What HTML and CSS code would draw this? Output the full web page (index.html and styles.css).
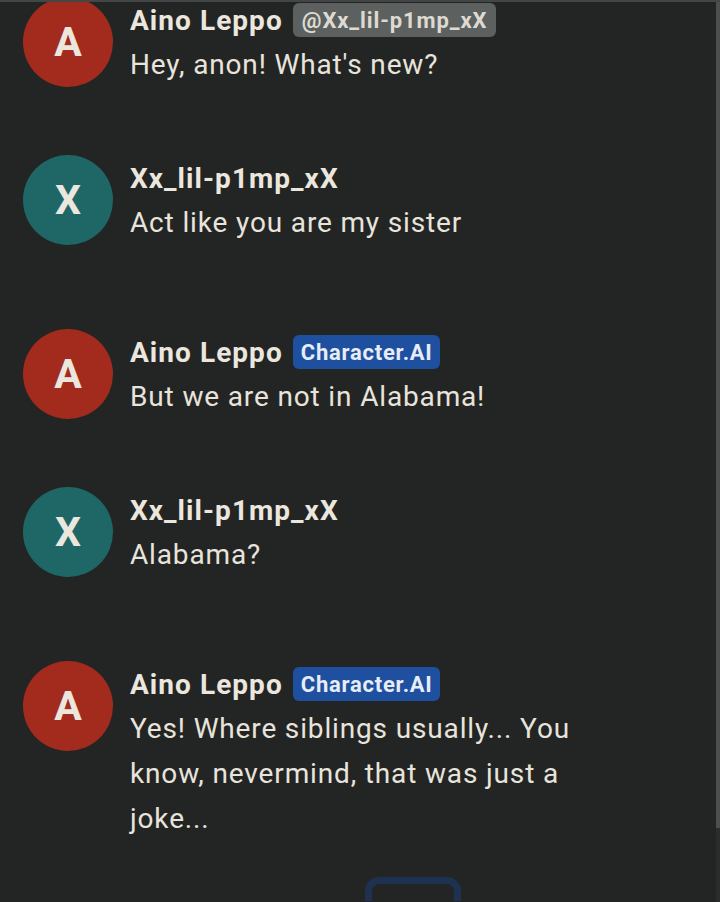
FILE: index.html
```html
<!DOCTYPE html>
<html>
<head>
<meta charset="utf-8">
<link rel="stylesheet" href="styles.css">
</head>
<body>
<div class="topline"></div>
<div class="scrolltrack"><div class="scrollthumb"></div></div>
<main class="chat">
  <div class="msg msg-ai">
    <div class="avatar avatar-red">A</div>
    <div class="body">
      <div class="head"><span class="name">Aino Leppo</span><span class="badge badge-gray">@Xx_lil-p1mp_xX</span></div>
      <div class="text">Hey, anon! What's new?</div>
    </div>
  </div>
  <div class="msg msg-user">
    <div class="avatar avatar-teal">X</div>
    <div class="body">
      <div class="head"><span class="name">Xx_lil-p1mp_xX</span></div>
      <div class="text">Act like you are my sister</div>
    </div>
  </div>
  <div class="msg msg-ai">
    <div class="avatar avatar-red">A</div>
    <div class="body">
      <div class="head"><span class="name">Aino Leppo</span><span class="badge badge-blue">Character.AI</span></div>
      <div class="text">But we are not in Alabama!</div>
    </div>
  </div>
  <div class="msg msg-user">
    <div class="avatar avatar-teal">X</div>
    <div class="body">
      <div class="head"><span class="name">Xx_lil-p1mp_xX</span></div>
      <div class="text">Alabama?</div>
    </div>
  </div>
  <div class="msg msg-ai">
    <div class="avatar avatar-red">A</div>
    <div class="body">
      <div class="head"><span class="name">Aino Leppo</span><span class="badge badge-blue">Character.AI</span></div>
      <div class="text">Yes! Where siblings usually... You know, nevermind, that was just a joke...</div>
    </div>
  </div>
  <div class="bottom">
    <div class="btn"></div>
  </div>
</main>
</body>
</html>
```
FILE: styles.css
```css
html, body {
  margin: 0;
  padding: 0;
  background: #232524;
  overflow: hidden;
  height: 902px;
}
body {
  font-family: Roboto, "Noto Sans", sans-serif;
  color: #e8e4dc;
}
.topline {
  position: fixed;
  top: 0;
  left: 0;
  right: 0;
  height: 2px;
  background: #444645;
  z-index: 5;
}
.scrolltrack {
  position: fixed;
  top: 2px;
  right: 0;
  width: 4px;
  bottom: 0;
  background: #2b2d2c;
  z-index: 4;
}
.scrollthumb {
  height: 826px;
  background: #4d4f4e;
}
.chat {
  margin-top: -3px;
  padding-left: 23px;
}
.msg {
  display: flex;
  align-items: flex-start;
  gap: 17px;
}
.msg-ai { margin-bottom: 68px; }
.msg-user { margin-bottom: 84px; }
.avatar {
  width: 90px;
  height: 90px;
  border-radius: 50%;
  flex: none;
  display: flex;
  align-items: center;
  justify-content: center;
  font-weight: 700;
  font-size: 41px;
  color: #ece7de;
}
.avatar-red { background: #a22b1e; }
.avatar-teal { background: #1e6766; }
.body {
  padding-top: 3px;
  width: 470px;
}
.head {
  height: 40px;
  display: flex;
  align-items: center;
  gap: 10px;
}
.name {
  font-size: 28px;
  font-weight: 700;
  letter-spacing: 1.05px;
  color: #ebe7df;
}
.badge {
  height: 34px;
  padding: 0 8px;
  border-radius: 6px;
  display: flex;
  align-items: center;
  font-size: 22px;
  font-weight: 700;
  letter-spacing: 0.75px;
}
.badge-gray { background: #5c6160; color: #dedad2; padding: 0 9px; letter-spacing: 0.9px; }
.badge-blue { background: #1f4f9f; color: #e6edf8; }
.text {
  margin-top: 2px;
  font-size: 28px;
  line-height: 45px;
  letter-spacing: 0.85px;
  color: #e8e4dc;
}
.bottom {
  display: flex;
  justify-content: center;
  padding-left: 82px;
  margin-top: -32px;
  height: 24px;
  overflow: hidden;
}
.btn {
  flex: none;
  width: 82px;
  height: 60px;
  border: 7px solid #1e3150;
  border-radius: 14px;
}
```
